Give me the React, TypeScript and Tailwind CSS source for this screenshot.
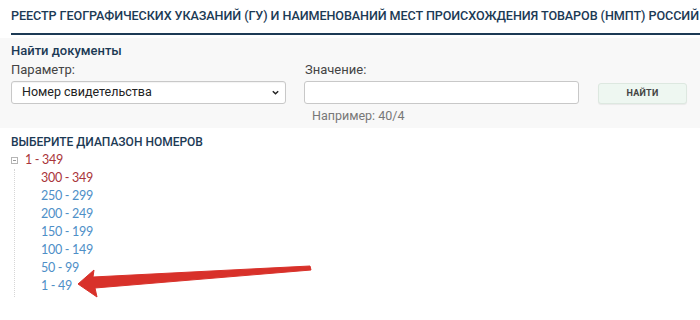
import { memo } from "react";

const ranges = ["300 - 349", "250 - 299", "200 - 249", "150 - 199", "100 - 149", "50 - 99", "1 - 49"];

const App = () => {
  return (
    <div className="w-[700px] h-[320px] bg-white overflow-hidden relative font-['Roboto',sans-serif] text-[13px] text-[#333]">
      <div className="pl-[11px] pt-[7px]">
        <h1 className="font-medium text-[12.6px] tracking-[-0.08px] leading-[18px] text-[#1c3a55] whitespace-nowrap">
          РЕЕСТР ГЕОГРАФИЧЕСКИХ УКАЗАНИЙ (ГУ) И НАИМЕНОВАНИЙ МЕСТ ПРОИСХОЖДЕНИЯ ТОВАРОВ (НМПТ) РОССИЙ
        </h1>
        <div className="h-[2px] bg-[#1c3a55] mt-[8px]" />
      </div>

      <div className="bg-[#f8f8f8] mt-[3px] px-[11px] pt-[5px] pb-[3px]">
        <p className="font-medium text-[13px] text-[#1c3a55] leading-[16px]">Найти документы</p>
        <div className="flex flex-row mt-[2px]">
          <div className="flex flex-col w-[275px]">
            <label className="text-[#444] leading-[18px]">Параметр:</label>
            <div className="mt-[2px] h-[23px] bg-white border border-[#c8c8c8] rounded-[3px] flex items-center justify-between pl-[10px] pr-[5px] shadow-[inset_0_1px_1px_rgba(0,0,0,0.05)]">
              <span className="text-[#222] text-[12.5px]">Номер свидетельства</span>
              <svg width="9" height="9" viewBox="0 0 10 10">
                <path d="M2 3.5 L5 6.5 L8 3.5" stroke="#222" strokeWidth="1.6" fill="none" />
              </svg>
            </div>
          </div>
          <div className="flex flex-col w-[275px] ml-[18px]">
            <label className="text-[#444] leading-[18px] pl-[1px]">Значение:</label>
            <div className="mt-[2px] h-[23px] bg-white border border-[#c8c8c8] rounded-[3px]" />
            <p className="text-[#777] text-[12.5px] leading-[18px] mt-[3px] pl-[8px]">Например: 40/4</p>
          </div>
          <div className="ml-[19px] pt-[21px]">
            <button className="w-[89px] h-[21px] bg-[#eef7f1] border border-[#dde8e0] rounded-[3px] text-[9px] font-bold text-[#444] tracking-[0.3px] shadow-[0_1px_1px_rgba(0,0,0,0.06)]">
              НАЙТИ
            </button>
          </div>
        </div>
      </div>

      <div className="px-[11px] pt-[5px]">
        <p className="font-medium text-[12px] text-[#1c3a55] leading-[18px]">ВЫБЕРИТЕ ДИАПАЗОН НОМЕРОВ</p>
        <div className="flex flex-row items-center h-[18px]">
          <span className="w-[7px] h-[7px] border border-[#b5b5b5] flex items-center justify-center">
            <span className="w-[3px] h-[1px] bg-[#999]" />
          </span>
          <span className="ml-[7px] text-[#a9343a] text-[12.5px] tracking-[-0.3px] font-['Lato',sans-serif]">1 - 349</span>
        </div>
        <div className="ml-[3px] border-l border-dotted border-[#d6d6d6] pl-[26px] pb-[2px]">
          {ranges.map((r, i) => (
            <div
              key={r}
              className={`h-[18px] leading-[18px] text-[12.5px] tracking-[-0.3px] font-['Lato',sans-serif] ${i === 0 ? "text-[#a9343a]" : "text-[#4e8fc7]"}`}
            >
              {r}
            </div>
          ))}
        </div>
      </div>

      <svg className="absolute left-0 top-0 pointer-events-none" width="700" height="320">
        <path
          d="M78 284 L94 270 L93 277 L310 266 L311 270 L95 288 L97 297 Z"
          fill="#d8312a"
          stroke="#d8312a"
          strokeWidth="1"
          strokeLinejoin="round"
        />
      </svg>
    </div>
  );
};

export default memo(App);
